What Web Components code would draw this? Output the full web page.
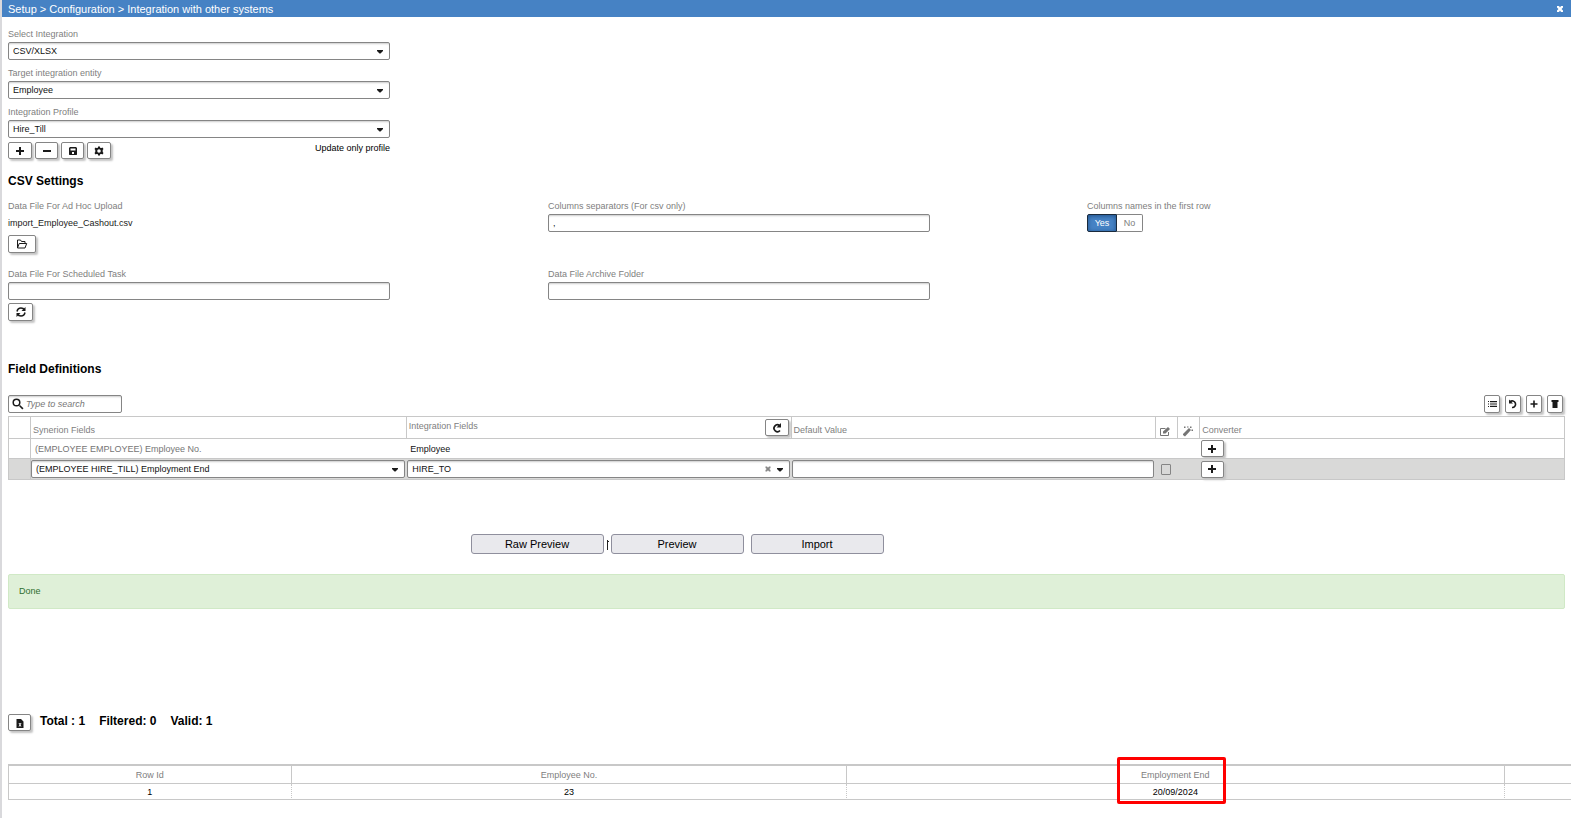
<!DOCTYPE html>
<html lang="en">
<head>
<meta charset="utf-8">
<title>Integration with other systems</title>
<style>
  body { margin: 0; background: #fff; color: #1a1a1a; font: 9px/12px "Liberation Sans", Arial, sans-serif; }
</style>
</head>
<body>
<integration-page></integration-page>

<script>
const define = (name, css, render) => customElements.define(name, class extends HTMLElement {
  constructor() { super(); this.attachShadow({ mode: 'open' }); }
  connectedCallback() {
    this.shadowRoot.innerHTML = `<style>*{box-sizing:border-box}[hidden]{display:none}${css}</style>${render(this)}`;
  }
});
const attr = (el, name) => el.getAttribute(name) || '';

/* Icons, drawn on a 12 x 12 grid in the current colour */
const ICONS = {
  plus: '<path d="M5 2h2v3h3v2H7v3H5V7H2V5h3z"/>',
  minus: '<path d="M2 5h8v2H2z"/>',
  save: '<path fill-rule="evenodd" d="M3 2h6l1 1v6.500L9.500 10h-7L2 9.500V3zM3.500 3.500v2h5v-2zM5 7v2h2V7z"/>',
  gear: '<path fill-rule="evenodd" d="M5 1.500h2v1.300l1.500.2 1-.5 1 1.500-.8 1v2l.8 1-1 1.500-1-.5-1.500.2v1.300H5V9.200L3.500 9l-1 .5-1-1.500.8-1V5l-.8-1 1-1.500 1 .5L5 2.800zM6 4.200a1.800 1.800 0 1 0 0 3.600 1.800 1.800 0 0 0 0-3.600z"/>',
  folder: '<path fill="none" stroke="currentColor" d="M1.500 10V2h3l1 1.500h3.500v2M1.500 10l1.700-4.500h7.500L9 10z"/>',
  sync: '<path fill="none" stroke="currentColor" stroke-width="1.500" d="M2 5.500C2.500 3 4 2 6 2c1.600 0 2.800.7 3.600 2M10 6.500C9.500 9 8 10 6 10c-1.600 0-2.800-.7-3.600-2"/><path d="M10.500 1v4h-4zM1.500 11V7h4z"/>',
  redo: '<path fill="none" stroke="currentColor" stroke-width="1.700" d="M8.500 3.500A3.400 3.400 0 1 0 9 8.500"/><path d="M10 1v4.500H5.500z"/>',
  undo: '<path fill="none" stroke="currentColor" stroke-width="1.600" d="M3 3.800A3.300 3.300 0 1 1 5 9.500"/><path d="M2 1.500v4h4z"/>',
  list: '<path d="M2 3h1v1H2zM2 5.500h1v1H2zM2 8h1v1H2zM4 3h7v1.200H4zM4 5.400h7v1.200H4zM4 7.800h7V9H4z"/>',
  trash: '<path d="M2.500 2h7v2h-7zM3.500 3h5v7h-5z"/>',
  smallplus: '<path d="M5.200 2.500h1.600v2.700h2.700v1.600H6.800v2.700H5.200V6.800H2.500V5.200h2.700z"/>',
  search: '<circle cx="4.500" cy="4.500" r="3.300" fill="none" stroke="currentColor" stroke-width="1.500"/><path d="M7 8l1-1 3.500 3.300-1.200 1.200z"/>',
  caret: '<path d="M3 5h6v1L6.500 8.500h-1L3 6z"/>',
  clear: '<path d="M3.500 3.500H5l1 1.300 1-1.300h1.500V5L7.200 6l1.300 1v1.500H7L6 7.200 5 8.500H3.500V7l1.300-1-1.300-1z"/>',
  close: '<path d="M3 3h2l1 1.500L7 3h2v1.500L7.500 6 9 7.500V9H7L6 7.500 5 9H3V7.500L4.500 6 3 4.500z"/>',
  edit: '<path fill="none" stroke="currentColor" d="M8.500 7v3.500h-8v-7h5"/><path d="M3 6.500 8 2l2 2-4.500 4.500H3z"/>',
  wand: '<path d="M1 9l6-6 2 2-6 6.500L1 10z"/><path d="M2 1.500h1.500V3H2zM5 1.500h1.500v1H5zM8 1.500h1.500V3H8zM9.500 4.500H11V6H9.500z"/>',
  sheet: '<path fill-rule="evenodd" d="M2.500 2H7l2.500 2.500V11h-7zM4.500 6l1 1.700-1 1.700h1l.5-.9.5.9h1l-1-1.700 1-1.700h-1l-.5.9-.5-.9z"/>'
};
define('ui-icon', `
  :host { display: inline-block; width: 12px; height: 12px; flex: none; }
  svg { display: block; width: 100%; height: 100%; fill: currentColor; }`,
  el => `<svg viewBox="0 0 12 12" aria-hidden="true">${ICONS[attr(el, 'name')]}</svg>`);

define('icon-button', `
  :host { display: inline-block; width: 24px; height: 17px; }
  :host([tall]) { height: 18px; }
  button { display: flex; align-items: center; justify-content: center; width: 100%; height: 100%; padding: 0;
    border: 1px solid #858585; border-radius: 2px; background: #fff; color: #1a1a1a; box-shadow: 2px 2px 2px #c4c4c4; }`,
  el => `<button type="button" aria-label="${attr(el, 'label')}"><ui-icon name="${attr(el, 'icon')}"></ui-icon></button>`);

/* Labelled text box, or a drop-down when kind="select" */
define('ui-field', `
  :host { display: block; }
  label { display: block; margin-bottom: 2px; color: #808080; }
  .box { display: flex; align-items: center; height: 18px; padding-right: 3px; border: 1px solid #858585;
    border-radius: 2px; background: #fff; box-shadow: inset 0 2px 2px -1px #ccc; }
  input, select { flex: 1; min-width: 0; height: 16px; margin: 0; padding: 0 0 0 4px; border: 0; outline: 0;
    appearance: none; background: none; color: #111; font: inherit; }
  :host([search]) input { padding-left: 2px; }
  input::placeholder { color: #777; font-style: italic; opacity: 1; }
  button { display: flex; padding: 0; border: 0; background: none; color: #858585; }
  .lead { margin-left: 3px; }
  .caret { pointer-events: none; }`,
  el => {
    const select = attr(el, 'kind') === 'select', value = attr(el, 'value');
    const shown = attr(el, 'label'), name = shown || attr(el, 'name');
    return `${shown ? `<label for="control">${shown}</label>` : ''}
      <div class="box">${el.hasAttribute('search') ? '<ui-icon class="lead" name="search"></ui-icon>' : ''}
      ${select ? `<select id="control" aria-label="${name}"><option>${value}</option></select>`
        : `<input id="control" type="text" aria-label="${name}" value="${value}" placeholder="${attr(el, 'placeholder')}">`}
      ${el.hasAttribute('clearable') ? '<button type="button" aria-label="Clear"><ui-icon name="clear"></ui-icon></button>' : ''}
      ${select ? '<ui-icon class="caret" name="caret"></ui-icon>' : ''}</div>`;
  });

define('title-bar', `
  :host { display: flex; align-items: center; justify-content: space-between; height: 17px; padding: 0 5px 0 6px;
    background: #4682c4; color: #fff; font-size: 11px; line-height: 18px; }
  button { display: flex; padding: 0; border: 0; background: none; color: inherit; }`,
  () => `<span><slot></slot></span><button type="button" aria-label="Close"><ui-icon name="close"></ui-icon></button>`);

define('section-title', `
  :host { display: block; }
  h2 { margin: 0; color: #000; font-size: 12px; line-height: 16px; }`,
  () => '<h2><slot></slot></h2>');

define('profile-form', `
  :host { display: grid; gap: 7px; width: 382px; padding-top: 11px; }
  .actions { display: flex; gap: 3px; margin-top: -3px; }
  .actions .slim { width: 23px; }
  .note { margin-left: auto; color: #000; }`,
  () => `<ui-field kind="select" label="Select Integration" value="CSV/XLSX"></ui-field>
    <ui-field kind="select" label="Target integration entity" value="Employee"></ui-field>
    <ui-field kind="select" label="Integration Profile" value="Hire_Till"></ui-field>
    <div class="actions">
      <icon-button icon="plus" label="Add profile"></icon-button>
      <icon-button class="slim" icon="minus" label="Remove profile"></icon-button>
      <icon-button class="slim" icon="save" label="Save profile"></icon-button>
      <icon-button icon="gear" label="Profile settings"></icon-button>
      <span class="note">Update only profile</span>
    </div>`);

define('yes-no', `
  :host { display: block; }
  fieldset { margin: 0; padding: 0; border: 0; }
  legend { padding: 0; margin-bottom: 2px; color: #808080; }
  .set { display: flex; }
  label { display: flex; align-items: center; justify-content: center; width: 26px; height: 18px;
    border: 1px solid #858585; border-left: 0; border-radius: 0 2px 2px 0; color: #808080; }
  label:has(:checked) { width: 30px; border: 1px solid #1a2a3c; border-radius: 2px 0 0 2px; background: #4682c4;
    color: #fff; box-shadow: inset 0 1px 4px #1f4f87; }
  input { appearance: none; width: 0; height: 0; margin: 0; }`,
  () => `<fieldset><legend><slot></slot></legend><div class="set">
    <label><input type="radio" name="first-row" checked>Yes</label>
    <label><input type="radio" name="first-row">No</label></div></fieldset>`);

define('csv-settings', `
  :host { display: grid; grid-template-columns: 540fr 539fr 478fr; row-gap: 15px; margin-top: 11px; }
  ui-field { max-width: 382px; }
  icon-button { display: block; width: 25px; margin-top: 3px; }
  icon-button.wide { width: 28px; }
  .label { display: block; color: #808080; }
  .file { display: block; margin-top: 2px; line-height: 18px; }`,
  () => `<div><span class="label">Data File For Ad Hoc Upload</span><span class="file">import_Employee_Cashout.csv</span>
      <icon-button tall class="wide" icon="folder" label="Choose file"></icon-button></div>
    <ui-field label="Columns separators (For csv only)" value=","></ui-field>
    <yes-no>Columns names in the first row</yes-no>
    <div><ui-field label="Data File For Scheduled Task"></ui-field>
      <icon-button tall icon="sync" label="Refresh"></icon-button></div>
    <ui-field label="Data File Archive Folder"></ui-field>`);

define('field-toolbar', `
  :host { display: flex; justify-content: space-between; margin: 18px 0 3px; }
  ui-field { width: 114px; }
  .tools { display: flex; gap: 5px; padding-right: 2px; }
  .tools icon-button { width: 16px; }`,
  () => `<ui-field search name="Search fields" placeholder="Type to search"></ui-field>
    <div class="tools"><icon-button tall icon="list" label="List"></icon-button><icon-button tall icon="undo" label="Undo"></icon-button>
    <icon-button tall icon="smallplus" label="Add"></icon-button><icon-button tall icon="trash" label="Delete"></icon-button></div>`);

define('field-table', `
  :host { display: block; }
  table { width: 100%; table-layout: fixed; border-collapse: collapse; border: 1px solid #c8c8c8; }
  .narrow { width: 22px; } .syn { width: 24.150%; } .int { width: 24.730%; } .def { width: 23.440%; }
  th { height: 22px; padding: 4px 2px 0; border: 1px solid #c8c8c8; color: #808080; font-weight: 400; text-align: left; }
  th.icon { padding: 7px 0 0 4px; }
  th.split { padding: 0 2px; }
  .head { display: flex; justify-content: space-between; line-height: 14px; }
  td { height: 20px; padding: 0; border-bottom: 1px solid #c8c8c8; }
  .on td { height: 21px; }
  td.mark { border-right: 1px solid #c8c8c8; }
  td.text { padding-left: 4px; color: #111; }
  td.muted { color: #757575; }
  tr.on { background: #d9d9d8; }
  ui-field { margin-right: 1px; }
  .inset { margin-left: 1px; }
  .def-box { margin: 0 2px 0 1px; }
  ui-icon, icon-button, input { display: block; }
  .icon ui-icon { color: #757575; }
  td icon-button { width: 23px; margin-left: 1px; }
  input { appearance: none; width: 10px; height: 11px; margin: 0 0 0 5px; border: 1px solid #858585; border-radius: 1px; }`,
  () => `<table>
    <colgroup><col class="narrow"><col class="syn"><col class="int"><col class="def"><col class="narrow"><col class="narrow"><col></colgroup>
    <thead><tr><th></th><th>Synerion Fields</th>
      <th class="split"><div class="head">Integration Fields<icon-button icon="redo" label="Reload fields"></icon-button></div></th>
      <th>Default Value</th><th class="icon"><ui-icon name="edit"></ui-icon></th><th class="icon"><ui-icon name="wand"></ui-icon></th><th>Converter</th></tr></thead>
    <tbody>
      <tr><td class="mark"></td><td class="text muted">(EMPLOYEE EMPLOYEE) Employee No.</td><td class="text">Employee</td><td></td><td></td><td></td>
        <td><icon-button icon="plus" label="Add converter"></icon-button></td></tr>
      <tr class="on"><td class="mark"></td>
        <td><ui-field kind="select" name="Synerion field" value="(EMPLOYEE HIRE_TILL) Employment End"></ui-field></td>
        <td><ui-field class="inset" kind="select" clearable name="Integration field" value="HIRE_TO"></ui-field></td>
        <td><ui-field class="def-box" name="Default value"></ui-field></td>
        <td><input type="checkbox" aria-label="Editable"></td><td></td>
        <td><icon-button icon="plus" label="Add converter"></icon-button></td></tr>
    </tbody></table>`);

define('run-actions', `
  :host { display: flex; justify-content: center; gap: 7px; margin: 54px 219px 0 0; }
  .cell { display: flex; position: relative; }
  button { width: 133px; height: 20px; padding: 0; border: 1px solid #8f8f9d; border-radius: 3px; background: #e9e9ed;
    color: #000; font: inherit; font-size: 11px; }
  svg { position: absolute; left: 100%; top: 6px; margin-left: 2px; width: 3px; height: 10px; }`,
  () => `<div class="cell"><button type="button">Raw Preview</button>
      <svg viewBox="0 0 3 10" aria-hidden="true"><path d="M1 0h1v10H1zM2 1h1v1H2z" fill="#222"/></svg></div>
    <button type="button">Preview</button><button type="button">Import</button>`);

define('status-message', `
  :host { display: block; margin-top: 20px; padding: 10px 10px 11px; border: 1px solid #d0e9c6; border-radius: 2px;
    background: #dff0d8; color: #2f6f31; }`,
  () => '<div role="status"><slot></slot></div>');

define('result-summary', `
  :host { display: flex; margin-top: 105px; color: #000; font-size: 12px; font-weight: 700; line-height: 14px; }
  icon-button { width: 23px; }
  .totals { display: flex; gap: 14px; margin-left: 9px; }`,
  () => `<icon-button icon="sheet" label="Export to Excel"></icon-button>
    <div class="totals"><span>Total : 1</span><span>Filtered: 0</span><span>Valid: 1</span></div>`);

define('result-table', `
  :host { display: block; margin: 33px -6px 0 0; }
  table { width: 100%; table-layout: fixed; border-collapse: separate; border-spacing: 0;
    border: solid #c8c8c8; border-width: 2px 0 0 1px; }
  .row { width: 18.100%; } .emp { width: 35.560%; } .end { width: 42.090%; }
  th, td { padding: 0; border: 0 solid #c8c8c8; border-width: 0 1px 1px 0; text-align: center; font-weight: 400; }
  th { position: relative; height: 18px; color: #808080; }
  td { height: 16px; color: #000; border-right-style: dotted; }
  th:last-child, td:last-child { border-right: 0; }
  .mark { position: absolute; left: calc(50% - 58px); top: -9px; width: 109px; height: 47px; border: 3px solid #f00; border-radius: 2px; }`,
  () => `<table><colgroup><col class="row"><col class="emp"><col class="end"><col></colgroup>
    <thead><tr><th>Row Id</th><th>Employee No.</th><th>Employment End<span class="mark"></span></th><th></th></tr></thead>
    <tbody><tr><td>1</td><td>23</td><td>20/09/2024</td><td></td></tr></tbody></table>`);

define('integration-page', `
  :host { display: block; min-height: 100vh; border-left: 2px solid #d9d9dc; box-sizing: border-box; overflow: hidden; }
  main { padding: 0 6px 16px; }
  .csv { margin-top: 14px; }
  .fields { margin-top: 40px; }`,
  () => `<title-bar>Setup &gt; Configuration &gt; Integration with other systems</title-bar>
    <main>
      <profile-form></profile-form>
      <section-title class="csv">CSV Settings</section-title>
      <csv-settings></csv-settings>
      <section-title class="fields">Field Definitions</section-title>
      <field-toolbar></field-toolbar>
      <field-table></field-table>
      <run-actions></run-actions>
      <status-message>Done</status-message>
      <result-summary></result-summary>
      <result-table></result-table>
    </main>`);
</script>
</body>
</html>
